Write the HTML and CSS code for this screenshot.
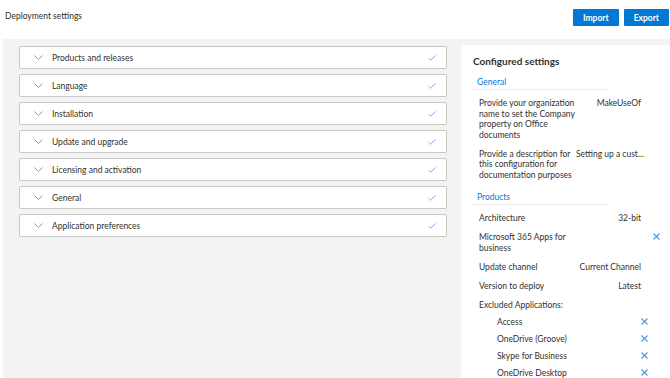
FILE: index.html
```html
<!DOCTYPE html>
<html lang="en">
<head>
    <meta charset="UTF-8">
    <title>Deployment settings</title>
    <link rel="stylesheet" href="styles.css">
</head>
<body>
    <div class="header">
        <div class="title">Deployment settings</div>
        <div class="actions">
            <button class="button">Import</button>
            <button class="button">Export</button>
        </div>
    </div>

    <div class="main">
        <div class="sections">
            <div class="section">
                <svg class="chevron" width="9" height="5" viewBox="0 0 9 5"><path d="M0.5 0.5 L4.5 4.5 L8.5 0.5" fill="none" stroke="#8a8a8a" stroke-width="0.9"/></svg>
                <span class="section-name">Products and releases</span>
                <svg class="check" width="8" height="6" viewBox="0 0 8 6"><path d="M0.5 3.2 L2.6 5.2 L7.5 0.5" fill="none" stroke="#7aaee6" stroke-width="1"/></svg>
            </div>
            <div class="section">
                <svg class="chevron" width="9" height="5" viewBox="0 0 9 5"><path d="M0.5 0.5 L4.5 4.5 L8.5 0.5" fill="none" stroke="#8a8a8a" stroke-width="0.9"/></svg>
                <span class="section-name">Language</span>
                <svg class="check" width="8" height="6" viewBox="0 0 8 6"><path d="M0.5 3.2 L2.6 5.2 L7.5 0.5" fill="none" stroke="#7aaee6" stroke-width="1"/></svg>
            </div>
            <div class="section">
                <svg class="chevron" width="9" height="5" viewBox="0 0 9 5"><path d="M0.5 0.5 L4.5 4.5 L8.5 0.5" fill="none" stroke="#8a8a8a" stroke-width="0.9"/></svg>
                <span class="section-name">Installation</span>
                <svg class="check" width="8" height="6" viewBox="0 0 8 6"><path d="M0.5 3.2 L2.6 5.2 L7.5 0.5" fill="none" stroke="#7aaee6" stroke-width="1"/></svg>
            </div>
            <div class="section">
                <svg class="chevron" width="9" height="5" viewBox="0 0 9 5"><path d="M0.5 0.5 L4.5 4.5 L8.5 0.5" fill="none" stroke="#8a8a8a" stroke-width="0.9"/></svg>
                <span class="section-name">Update and upgrade</span>
                <svg class="check" width="8" height="6" viewBox="0 0 8 6"><path d="M0.5 3.2 L2.6 5.2 L7.5 0.5" fill="none" stroke="#7aaee6" stroke-width="1"/></svg>
            </div>
            <div class="section">
                <svg class="chevron" width="9" height="5" viewBox="0 0 9 5"><path d="M0.5 0.5 L4.5 4.5 L8.5 0.5" fill="none" stroke="#8a8a8a" stroke-width="0.9"/></svg>
                <span class="section-name">Licensing and activation</span>
                <svg class="check" width="8" height="6" viewBox="0 0 8 6"><path d="M0.5 3.2 L2.6 5.2 L7.5 0.5" fill="none" stroke="#7aaee6" stroke-width="1"/></svg>
            </div>
            <div class="section">
                <svg class="chevron" width="9" height="5" viewBox="0 0 9 5"><path d="M0.5 0.5 L4.5 4.5 L8.5 0.5" fill="none" stroke="#8a8a8a" stroke-width="0.9"/></svg>
                <span class="section-name">General</span>
                <svg class="check" width="8" height="6" viewBox="0 0 8 6"><path d="M0.5 3.2 L2.6 5.2 L7.5 0.5" fill="none" stroke="#7aaee6" stroke-width="1"/></svg>
            </div>
            <div class="section">
                <svg class="chevron" width="9" height="5" viewBox="0 0 9 5"><path d="M0.5 0.5 L4.5 4.5 L8.5 0.5" fill="none" stroke="#8a8a8a" stroke-width="0.9"/></svg>
                <span class="section-name">Application preferences</span>
                <svg class="check" width="8" height="6" viewBox="0 0 8 6"><path d="M0.5 3.2 L2.6 5.2 L7.5 0.5" fill="none" stroke="#7aaee6" stroke-width="1"/></svg>
            </div>
        </div>

        <div class="summary">
            <div class="summary-title">Configured settings</div>

            <div class="group-title">General</div>
            <div class="row">
                <div class="label">Provide your organization name to set the Company property on Office documents</div>
                <div class="value">MakeUseOf</div>
            </div>
            <div class="row">
                <div class="label">Provide a description for this configuration for documentation purposes</div>
                <div class="value">Setting up a cust...</div>
            </div>

            <div class="group-title products">Products</div>
            <div class="row">
                <div class="label">Architecture</div>
                <div class="value">32-bit</div>
            </div>
            <div class="row">
                <div class="label">Microsoft 365 Apps for business</div>
                <div class="value"></div>
                <svg class="remove" width="7" height="7" viewBox="0 0 7 7"><path d="M0.5 0.5 L6.5 6.5 M6.5 0.5 L0.5 6.5" stroke="#4d98e3" stroke-width="1.1"/></svg>
            </div>
            <div class="row">
                <div class="label">Update channel</div>
                <div class="value">Current Channel</div>
            </div>
            <div class="row">
                <div class="label">Version to deploy</div>
                <div class="value">Latest</div>
            </div>
            <div class="row excluded">
                <div class="label wide">Excluded Applications:</div>
            </div>
            <div class="row app">
                <div class="label">Access</div>
                <svg class="remove" width="7" height="7" viewBox="0 0 7 7"><path d="M0.5 0.5 L6.5 6.5 M6.5 0.5 L0.5 6.5" stroke="#4d98e3" stroke-width="1.1"/></svg>
            </div>
            <div class="row app">
                <div class="label">OneDrive (Groove)</div>
                <svg class="remove" width="7" height="7" viewBox="0 0 7 7"><path d="M0.5 0.5 L6.5 6.5 M6.5 0.5 L0.5 6.5" stroke="#4d98e3" stroke-width="1.1"/></svg>
            </div>
            <div class="row app">
                <div class="label">Skype for Business</div>
                <svg class="remove" width="7" height="7" viewBox="0 0 7 7"><path d="M0.5 0.5 L6.5 6.5 M6.5 0.5 L0.5 6.5" stroke="#4d98e3" stroke-width="1.1"/></svg>
            </div>
            <div class="row app">
                <div class="label">OneDrive Desktop</div>
                <svg class="remove" width="7" height="7" viewBox="0 0 7 7"><path d="M0.5 0.5 L6.5 6.5 M6.5 0.5 L0.5 6.5" stroke="#4d98e3" stroke-width="1.1"/></svg>
            </div>
        </div>
    </div>
</body>
</html>
```

FILE: styles.css
```css
body {
    margin: 0;
    font-family: Lato, "Open Sans", sans-serif;
    color: #323130;
    background-color: white;
    height: 378px;
    overflow: hidden;
}
.header {
    height: 39px;
    display: flex;
    justify-content: space-between;
    align-items: flex-start;
}
.title {
    font-size: 8.5px;
    padding: 11px 0 0 5px;
}
.actions {
    display: flex;
    gap: 5px;
    padding: 9px 1px 0 0;
}
.button {
    background-color: #0078d4;
    color: white;
    font-family: inherit;
    font-size: 8.5px;
    font-weight: 700;
    height: 17px;
    padding: 0 10px;
    border: none;
    border-radius: 1px;
}
.main {
    margin-left: 3px;
    height: 339px;
    background-color: #f3f3f3;
    display: flex;
    gap: 14px;
}
.sections {
    width: 428px;
    padding: 7px 0 0 16px;
    display: flex;
    flex-direction: column;
    gap: 5px;
}
.section {
    height: 21px;
    background-color: white;
    border: 1px solid #c8c8c8;
    border-radius: 2px;
    display: flex;
    align-items: center;
    font-size: 8.5px;
}
.chevron {
    margin-left: 14px;
    margin-right: 9px;
}
.section-name {
    flex: 1;
}
.check {
    margin-right: 10px;
}
.summary {
    flex: 1;
    margin-top: 6px;
    background-color: white;
    padding: 10px 0 0 12px;
    font-size: 8.5px;
}
.summary-title {
    font-size: 10px;
    font-weight: 700;
    margin-bottom: 10px;
}
.group-title {
    color: #0078d4;
    font-size: 8.5px;
    width: 130px;
    padding: 0 0 2px 4px;
    border-bottom: 1px solid #edebe9;
    margin-bottom: 8px;
}
.group-title.products {
    margin-top: 12px;
}
.row {
    display: flex;
    align-items: flex-start;
    padding-left: 6px;
    line-height: 10.5px;
    margin-bottom: 8.5px;
}
.label {
    width: 97px;
}
.label.wide {
    width: auto;
}
.value {
    width: 65px;
    text-align: right;
    white-space: nowrap;
}
.remove {
    margin-left: 12px;
    margin-top: 1px;
}
.row.excluded {
    margin-bottom: 6.5px;
}
.row.app {
    padding-left: 24px;
    margin-bottom: 6.5px;
}
.row.app .label {
    width: 132px;
}
```
